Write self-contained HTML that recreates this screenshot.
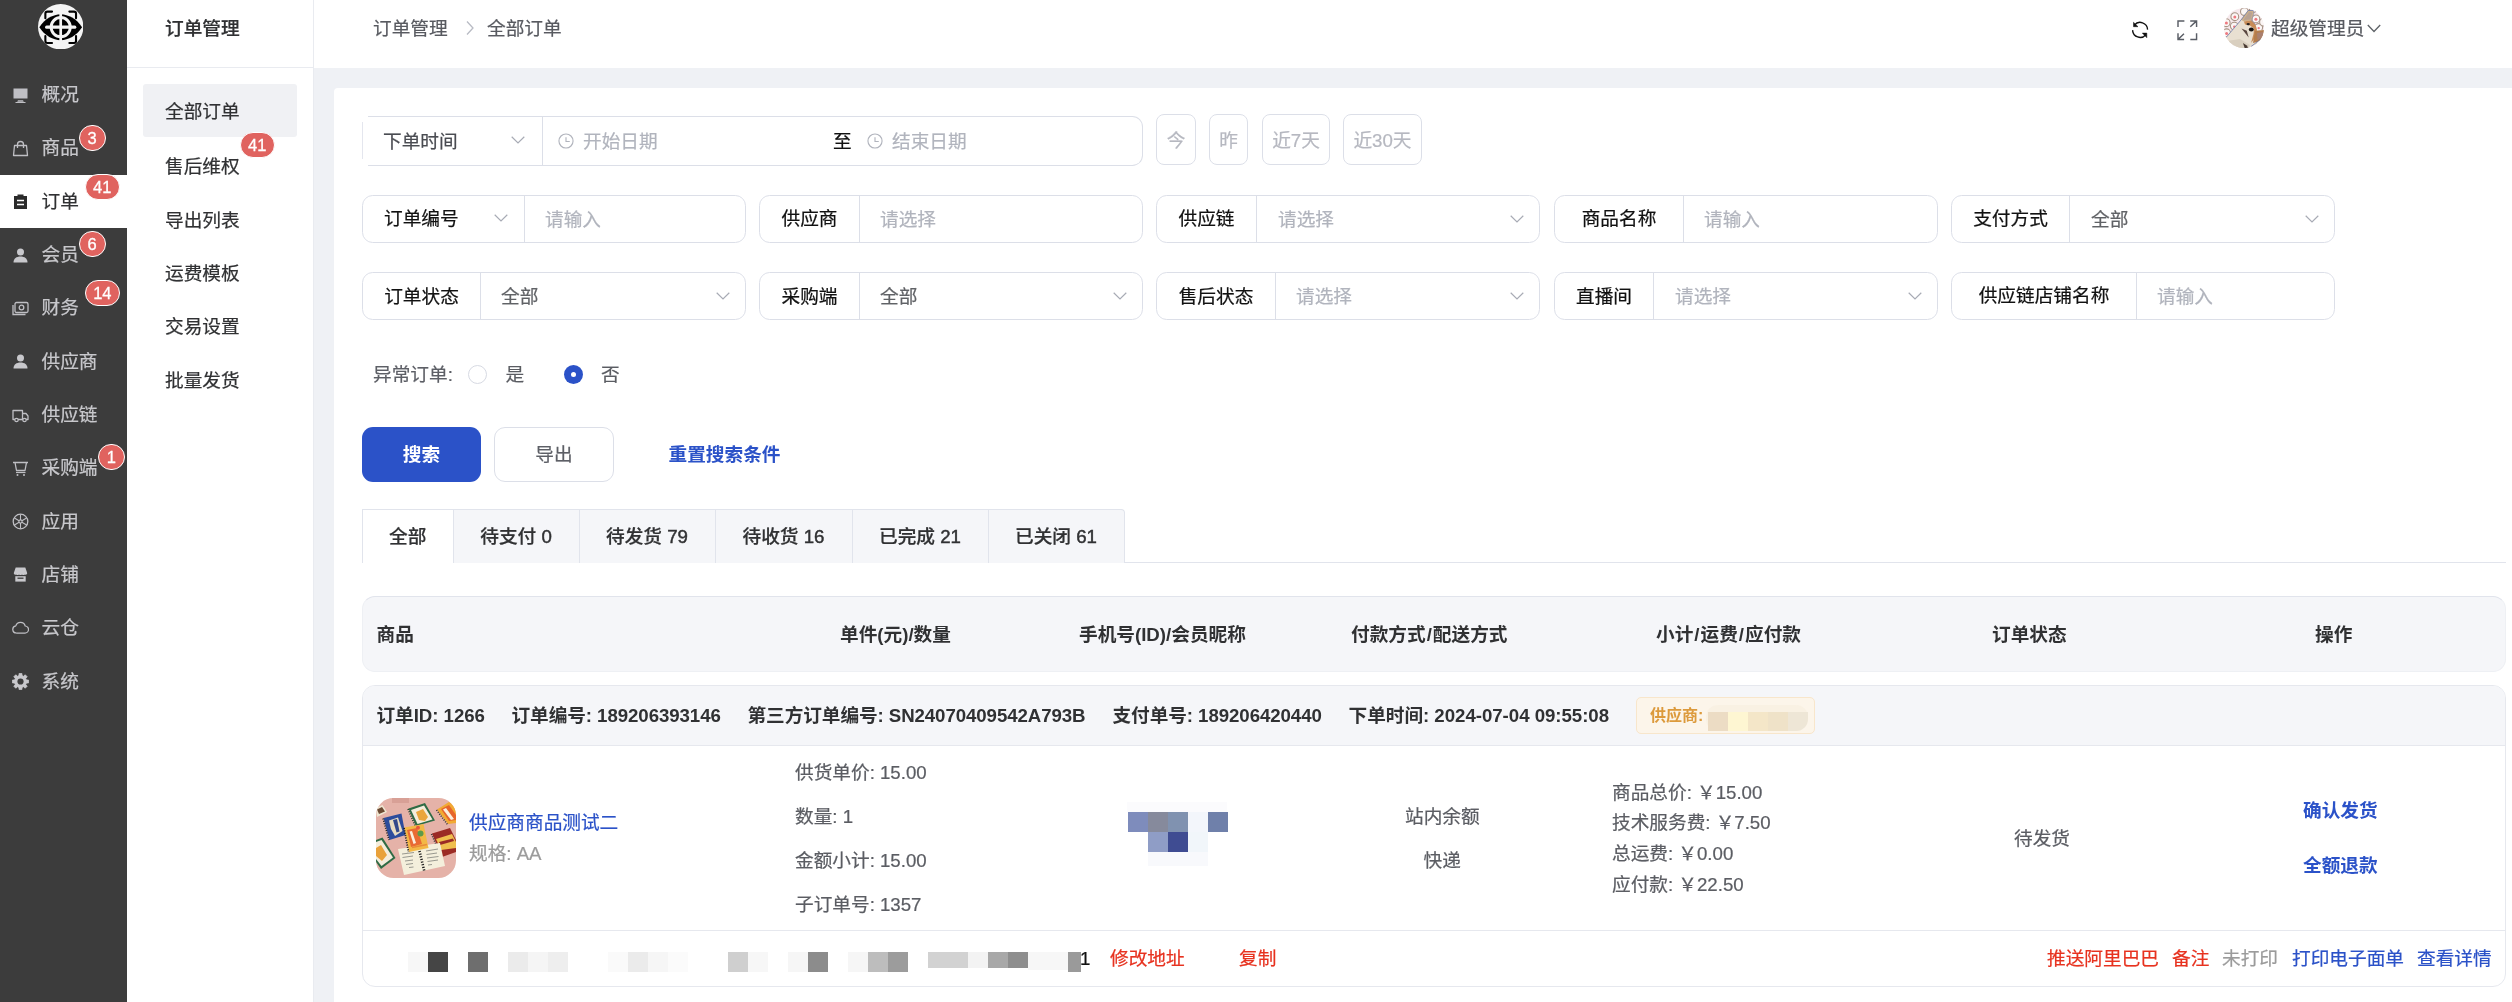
<!DOCTYPE html>
<html lang="zh-CN">
<head>
<meta charset="utf-8">
<title>订单管理 - 全部订单</title>
<style>
*{box-sizing:border-box;margin:0;padding:0}
html,body{width:2512px;height:1002px;overflow:hidden;background:#eff1f5}
#side,#sub,#top,#card,#content{will-change:transform}
body{font-family:"Liberation Sans","Noto Sans CJK SC",sans-serif;font-size:18.67px;color:#303133;position:relative;-webkit-font-smoothing:antialiased;-webkit-text-stroke-width:.22px}
.abs{position:absolute}
.t{position:absolute;white-space:nowrap;line-height:30px;height:30px}
.b{font-weight:700;-webkit-text-stroke-width:0}
.m{font-weight:500}
/* sidebar */
#side{position:absolute;left:0;top:0;width:127px;height:1002px;background:#3c3c3c}
#side .it{position:absolute;left:0;width:127px;height:53.33px;color:#c8c8cc}
#side .it.on{background:#fff;color:#303133}
#side .it span{position:absolute;left:41.5px;top:12.5px;line-height:28px;font-size:18.67px}
#side .it svg{position:absolute;left:12px;top:18.5px;width:17px;height:17px}
.bdg{position:absolute;box-sizing:content-box;height:24px;border-radius:14px;background:#e0635f;color:#fff;font-size:16.500px;line-height:25px;text-align:center;border:1.33px solid #fff;padding:0 7.8px;-webkit-text-stroke:.3px #fff}
/* sub sidebar */
#sub{position:absolute;left:127px;top:0;width:187px;height:1002px;background:#fff;border-right:1px solid #e9ebf0}
#sub .hd{position:absolute;left:0;top:0;width:186px;height:67.5px;border-bottom:1px solid #e9ebf0}
#sub .si{position:absolute;left:38px;line-height:30px;font-size:18.67px;color:#303133}
/* header */
#top{position:absolute;left:314px;top:0;width:2198px;height:67.5px;background:#fff}
/* card */
#card{position:absolute;left:334px;top:88px;width:2200px;height:940px;background:#fff;border-radius:4px}
.grp{position:absolute;height:48px;border:1px solid #dcdfe8;border-radius:10.67px;background:#fff}
.grp .lab{position:absolute;left:0;top:0;height:46px;line-height:47px;text-align:center;color:#111;border-right:1px solid #dcdfe8}
.grp .val{position:absolute;top:0;height:46px;line-height:47px;color:#606266}
.grp .ph{position:absolute;top:0;height:46px;line-height:47px;color:#b1b4bd}
.chev{position:absolute;width:14px;height:8px}
.qb{position:absolute;top:114px;height:51px;border:1px solid #dcdfe8;border-radius:8px;color:#b6b8c0;text-align:center;line-height:51px;background:#fff}
.tab{position:absolute;top:509px;height:54px;border-top:1px solid #e1e4ec;border-right:1px solid #e1e4ec;background:#f5f6f9;text-align:center;line-height:53px;font-weight:500;color:#303133}
.tab i{font-style:normal;-webkit-text-stroke:.45px #303133}
.sl{margin:0 1px}
.red{color:#e7321f}
.blue{color:#2b52c8}
.g6{color:#5b5d63}
</style>
</head>
<body>
<!-- ============ SIDEBAR ============ -->
<div id="side">
  <svg class="abs" style="left:37.800px;top:3.700px" width="45.400" height="45.400" viewBox="0 0 45.300 45.300">
    <circle cx="22.650" cy="22.650" r="22.650" fill="#f4f4f4"/>
    <path d="M1.300 23.100 C7 14.500 15 10.400 22.650 10.200 C30.300 10.400 38.300 14.500 44 23.100 C38.300 31.700 30.300 35.900 22.650 36.100 C15 35.900 7 31.700 1.300 23.100Z" fill="#000"/>
    <circle cx="22.650" cy="23.100" r="9.550" fill="none" stroke="#f4f4f4" stroke-width="2.900"/>
    <path d="M22.650 9.500 V37" stroke="#f4f4f4" stroke-width="2.700" fill="none"/>
    <path d="M8.600 23.100 H36.700" stroke="#f4f4f4" stroke-width="3.100" fill="none" stroke-linecap="round"/>
    <path d="M7.350 14.200 V9.600 Q7.350 7.600 9.350 7.600 H14 M31.300 7.600 H35.950 Q37.950 7.600 37.950 9.600 V14.200 M37.950 32 V36.900 Q37.950 38.900 35.950 38.900 H31.300 M14 38.900 H9.350 Q7.350 38.900 7.350 36.900 V32" stroke="#000" stroke-width="2.100" fill="none" stroke-linecap="round"/>
  </svg>
  <div class="it" style="top:68px"><svg viewBox="0 0 17 17"><path d="M1.500 1.500h14v10h-14z" fill="#bfbfc4"/><path d="M6 13.300h5l.8 1.500h-6.600z M3.500 15h10v1h-10z" fill="#bfbfc4"/></svg><span>概况</span></div>
  <div class="it" style="top:121.330px"><svg viewBox="0 0 17 17"><path d="M2.500 5.500h12l1 10h-14z" fill="none" stroke="#bfbfc4" stroke-width="1.300" stroke-linejoin="round"/><path d="M5.500 8V4.500a3 3 0 0 1 6 0V8" fill="none" stroke="#bfbfc4" stroke-width="1.300"/></svg><span>商品</span></div>
  <div class="it on" style="top:174.670px"><svg viewBox="0 0 17 17"><path d="M2 3h3.500V1.500h6V3H15v13H2z" fill="#2b2b2b"/><path d="M5 7.500h7M5 11.500h7" stroke="#fff" stroke-width="1.500"/></svg><span style="top:13.400px">订单</span></div>
  <div class="it" style="top:228px"><svg viewBox="0 0 17 17"><circle cx="8.500" cy="5" r="3.500" fill="#c8c8cc"/><path d="M1.500 15.500c0-4 3-6 7-6s7 2 7 6z" fill="#c8c8cc"/></svg><span>会员</span></div>
  <div class="it" style="top:281.330px"><svg viewBox="0 0 17 17"><rect x="3" y="2.500" width="13" height="10" rx="1.500" fill="none" stroke="#bfbfc4" stroke-width="1.300"/><circle cx="9.500" cy="7.500" r="2.300" fill="none" stroke="#bfbfc4" stroke-width="1.300"/><path d="M1 5v9.500h12.500" fill="none" stroke="#bfbfc4" stroke-width="1.300"/></svg><span>财务</span></div>
  <div class="it" style="top:334.670px"><svg viewBox="0 0 17 17"><circle cx="8.500" cy="5" r="3.500" fill="#c8c8cc"/><path d="M1.500 15.500c0-4 3-6 7-6s7 2 7 6z" fill="#c8c8cc"/></svg><span style="top:13.400px">供应商</span></div>
  <div class="it" style="top:388px"><svg viewBox="0 0 17 17"><path d="M1 3.500h9.500v9H1z M10.500 6.500h3.500l2 2.500v3.500h-5.500" fill="none" stroke="#bfbfc4" stroke-width="1.300" stroke-linejoin="round"/><circle cx="4.500" cy="13" r="1.700" fill="#3c3c3c" stroke="#bfbfc4" stroke-width="1.200"/><circle cx="12.500" cy="13" r="1.700" fill="#3c3c3c" stroke="#bfbfc4" stroke-width="1.200"/></svg><span>供应链</span></div>
  <div class="it" style="top:441.330px"><svg viewBox="0 0 17 17"><path d="M1 2.500h15M3 2.500l1.500 8h8.500l1.500-8" fill="none" stroke="#bfbfc4" stroke-width="1.300" stroke-linejoin="round"/><path d="M4 12.500h9.500" stroke="#bfbfc4" stroke-width="1.200"/><circle cx="5.500" cy="15" r="1" fill="#bfbfc4"/><circle cx="12" cy="15" r="1" fill="#bfbfc4"/></svg><span>采购端</span></div>
  <div class="it" style="top:494.670px"><svg viewBox="0 0 17 17"><circle cx="8.500" cy="8.500" r="7.300" fill="none" stroke="#bfbfc4" stroke-width="1.300"/><circle cx="8.500" cy="8.500" r="1.600" fill="none" stroke="#bfbfc4" stroke-width="1.100"/><path d="M8.500 1.500v5.400M8.500 10.100v5.400M2.400 5l4.700 2.700M9.900 9.300l4.700 2.700M2.400 12l4.700-2.700M9.900 7.700l4.700-2.700" stroke="#bfbfc4" stroke-width="1.100"/></svg><span style="top:13.400px">应用</span></div>
  <div class="it" style="top:548px"><svg viewBox="0 0 17 17"><path d="M3.700 .500h9.600l1.900 5.600c0 1.600-1.400 2.100-2.300 1.300-.9.900-2.100.9-2.900 0-.8.900-2.200.9-3 0-.8.900-2 .9-2.900 0-.9.800-2.300.3-2.300-1.300z" fill="#c8c8cc"/><path d="M3.300 9.200h10.400V14.600H3.300z" fill="#c8c8cc"/><path d="M5.500 11.200h6" stroke="#3c3c3c" stroke-width="1.300"/></svg><span>店铺</span></div>
  <div class="it" style="top:601.330px"><svg viewBox="0 0 17 17" style="left:11.800px;top:17px"><path d="M4.300 15a3.600 3.600 0 0 1-.5-7.150A4.900 4.900 0 0 1 13.200 8a3.500 3.500 0 0 1-.4 7z" fill="none" stroke="#bfbfc4" stroke-width="1.250" stroke-linejoin="round"/></svg><span>云仓</span></div>
  <div class="it" style="top:654.670px"><svg viewBox="0 0 17 17" style="left:11.800px;top:18.300px"><path d="M6.93 2.61L7.11 0.42L9.89 0.42L10.07 2.61L11.56 3.22L13.23 1.80L15.20 3.77L13.78 5.44L14.39 6.93L16.58 7.11L16.58 9.89L14.39 10.07L13.78 11.56L15.20 13.23L13.23 15.20L11.56 13.78L10.07 14.39L9.89 16.58L7.11 16.58L6.93 14.39L5.44 13.78L3.77 15.20L1.80 13.23L3.22 11.56L2.61 10.07L0.42 9.89L0.42 7.11L2.61 6.93L3.22 5.44L1.80 3.77L3.77 1.80L5.44 3.22Z" fill="#c8c8cc" stroke="#c8c8cc" stroke-width=".8" stroke-linejoin="round"/><circle cx="8.500" cy="8.500" r="3.100" fill="#3c3c3c"/></svg><span style="top:13.400px">系统</span></div>
  <div class="bdg" style="left:78.800px;top:124.800px">3</div>
  <div class="bdg" style="left:84.700px;top:174.400px;padding:0 7.400px">41</div>
  <div class="bdg" style="left:78.800px;top:230.800px">6</div>
  <div class="bdg" style="left:84.800px;top:279.800px;padding:0 7.400px">14</div>
  <div class="bdg" style="left:98px;top:443.800px">1</div>
</div>

<!-- ============ SUB SIDEBAR ============ -->
<div id="sub">
  <div class="hd"><div class="si m" style="top:14px">订单管理</div></div>
  <div class="abs" style="left:16px;top:84px;width:154px;height:53px;background:#f0f1f4;border-radius:3px"></div>
  <div class="si" style="top:97px">全部订单</div>
  <div class="si" style="top:152px">售后维权</div>
  <div class="si" style="top:206px">导出列表</div>
  <div class="si" style="top:259px">运费模板</div>
  <div class="si" style="top:312px">交易设置</div>
  <div class="si" style="top:366px">批量发货</div>
  <div class="bdg" style="left:112.700px;top:132px;padding:0 7.400px">41</div>
</div>

<!-- ============ TOP HEADER ============ -->
<div id="top">
  <div class="t" style="left:59px;top:14px;color:#585a60">订单管理</div>
  <svg class="abs" style="left:150.700px;top:20px" width="10" height="16" viewBox="0 0 10 16"><path d="M2 1.500l6 6.500-6 6.500" fill="none" stroke="#b8bbc4" stroke-width="1.300"/></svg>
  <div class="t" style="left:173px;top:14px;color:#585a60">全部订单</div>
  <!-- refresh -->
  <svg class="abs" style="left:1818px;top:21px" width="18" height="18" viewBox="0 0 18 18"><path d="M2.330 4.060A7.500 7.500 0 0 1 15.580 8.620M.590 9.140A7.500 7.500 0 0 0 13.830 13.700" fill="none" stroke="#111" stroke-width="1.350"/><path d="M1.500 1.300V5.700H6z M10.300 12.100H14.800V16.700z" fill="#111" stroke="#111" stroke-width=".5" stroke-linejoin="round"/></svg>
  <!-- fullscreen -->
  <svg class="abs" style="left:1863px;top:20px" width="21" height="21" viewBox="0 0 21 21"><path d="M1 7.100V.900H7.400M19.570 13.200V19.560H13.300M13.200 .900H19.570V6.900M19.570 .900L13.300 6.700M1 13.300V19.560H7.100M1 19.560L6.950 13.650" fill="none" stroke="#5a5e66" stroke-width="1.450"/></svg>
  <!-- avatar -->
  <svg class="abs" style="left:1910px;top:8.100px" width="40" height="40.200" viewBox="0 0 40 40">
    <defs><clipPath id="av"><circle cx="20" cy="20" r="20"/></clipPath></defs>
    <g clip-path="url(#av)">
      <rect width="40" height="40" fill="#f6e9ec"/>
      <g fill="#fbf6f5" stroke="#a89486" stroke-width="1.100">
        <circle cx="10.800" cy="8.600" r="3.900"/><circle cx="2.200" cy="14.600" r="3.900"/><circle cx="10.300" cy="18" r="3.900"/><circle cx="2.600" cy="24.700" r="3.900"/><circle cx="31.900" cy="10.800" r="3.900"/><circle cx="20.400" cy="3.400" r="3.900"/><circle cx="34.700" cy="19.400" r="3.900"/><circle cx="39.500" cy="14" r="3.900"/><circle cx="36" cy="36" r="3.900"/><circle cx="29" cy="1" r="3.500"/>
      </g>
      <g fill="#ee7a80"><circle cx="10.800" cy="9" r="1.500"/><circle cx="2.400" cy="15" r="1.500"/><circle cx="10.300" cy="18.600" r="1.300"/><circle cx="2.600" cy="25.300" r="1.500"/><circle cx="31.900" cy="11.200" r="1.500"/><circle cx="34.700" cy="20" r="1.200"/></g>
      <path d="M2 29.200L17 11.700L24.200 2.400L29.500 2.600L29.700 5.500L27.500 12.200L31.500 16.500L33 22L40 22V30L30 37.500L26 41H0V32z" fill="#e8dfd1"/>
      <path d="M17 11.700L24.200 2.400L29.500 2.600L29.700 5.500L27.500 12.200L19.900 13.400z" fill="#cdb08c"/>
      <path d="M19.500 11.800L25 4.200L28.300 4.500L26.300 11.300z" fill="#b8a294"/>
      <path d="M19.900 13.300L27.500 12.200L31.500 16.500L33 22L31 30L27 35L29.500 26L30 20.500L26 17.500L21 16.500z" fill="#c98d58"/>
      <path d="M31 22.800L40 22V30L33 34L29 35z" fill="#b47d4d"/>
      <path d="M33 25L39 24V29L33.500 32z" fill="#a98070"/>
      <path d="M3 33L16 31L26 37L24 41H2z" fill="#d9cfbf"/>
      <path d="M19 35L22.800 37.500L25 41H21z" fill="#4a3b34"/>
      <ellipse cx="24.200" cy="16" rx="1.700" ry="1.200" fill="#2a2320"/>
      <ellipse cx="27.300" cy="21.400" rx="2.500" ry="2.100" fill="#17120f"/>
      <path d="M17.500 20.400L22.800 22.600L24.700 29.500z" fill="#5a4740"/>
      <path d="M2 29.400L17 11.900L24.200 2.400H29.500" fill="none" stroke="#5b6ea6" stroke-width=".7"/>
      <path d="M29.500 2.600L29.700 5.500L27.500 12.200L31.500 16.500" fill="none" stroke="#6c7bb0" stroke-width=".5"/>
      <path d="M27 38.500L40 28.500" fill="none" stroke="#5b6ea6" stroke-width=".7"/>
    </g>
  </svg>
  <div class="t" style="left:1957px;top:14px;color:#585a60">超级管理员</div>
  <svg class="abs" style="left:2053px;top:24px" width="14" height="9" viewBox="0 0 14 9"><path d="M.8 1l6.200 6.500L13.200 1" fill="none" stroke="#5f6368" stroke-width="1.300"/></svg>
</div>

<!-- ============ CARD ============ -->
<div id="card"></div>
<div id="content" style="position:absolute;left:0;top:0;width:2512px;height:1002px">
<!-- row 1 : date -->
<div class="abs" style="left:368px;top:116px;width:775px;height:50px;border:1px solid #dcdfe8;border-left:0;border-radius:0 10.670px 10.670px 0;background:#fff"></div>
<div class="abs" style="left:362px;top:122px;width:1px;height:37px;background:#e4e6ee"></div>
<div class="abs" style="left:542px;top:116px;width:1px;height:50px;background:#dcdfe8"></div>
<div class="t" style="left:383px;top:127px;color:#4a4c52">下单时间</div>
<svg class="chev" style="left:511px;top:136px" viewBox="0 0 14 8"><path d="M.7.8l6.300 6.200L13.300.8" fill="none" stroke="#a8abb5" stroke-width="1.200"/></svg>
<svg class="abs" style="left:558px;top:133px" width="16" height="16" viewBox="0 0 17 17"><circle cx="8.500" cy="8.500" r="7.500" fill="none" stroke="#b1b4bd" stroke-width="1.200"/><path d="M8.500 4.500v4.500h4" fill="none" stroke="#b1b4bd" stroke-width="1.200"/></svg>
<div class="t" style="left:583px;top:127px;color:#b1b4bd">开始日期</div>
<div class="t" style="left:833px;top:127px;color:#111">至</div>
<svg class="abs" style="left:867px;top:133px" width="16" height="16" viewBox="0 0 17 17"><circle cx="8.500" cy="8.500" r="7.500" fill="none" stroke="#b1b4bd" stroke-width="1.200"/><path d="M8.500 4.500v4.500h4" fill="none" stroke="#b1b4bd" stroke-width="1.200"/></svg>
<div class="t" style="left:892px;top:127px;color:#b1b4bd">结束日期</div>
<div class="qb" style="left:1156px;width:40px">今</div>
<div class="qb" style="left:1209px;width:39px">昨</div>
<div class="qb" style="left:1262px;width:68px">近7天</div>
<div class="qb" style="left:1343px;width:79px">近30天</div>

<!-- row 2 -->
<div class="grp" style="left:362px;top:195px;width:384px"><div class="lab" style="width:162px;border-right:0"></div><div class="abs" style="left:161px;top:0;width:1px;height:47px;background:#dcdfe8"></div><div class="val" style="left:21px;color:#111;line-height:45px">订单编号</div><div class="ph" style="left:182px">请输入</div><svg class="chev" style="left:131px;top:18px" viewBox="0 0 14 8"><path d="M.7.8l6.300 6.200L13.300.8" fill="none" stroke="#a8abb5" stroke-width="1.200"/></svg></div>
<div class="grp" style="left:759px;top:195px;width:384px"><div class="lab" style="width:100px;line-height:45px">供应商</div><div class="ph" style="left:120px">请选择</div></div>
<div class="grp" style="left:1156px;top:195px;width:384px"><div class="lab" style="width:100px;line-height:45px">供应链</div><div class="ph" style="left:121px">请选择</div><svg class="chev" style="left:353px;top:19px" viewBox="0 0 14 8"><path d="M.7.8l6.300 6.200L13.300.8" fill="none" stroke="#a8abb5" stroke-width="1.200"/></svg></div>
<div class="grp" style="left:1554px;top:195px;width:384px"><div class="lab" style="width:129px;line-height:45px">商品名称</div><div class="ph" style="left:149px">请输入</div></div>
<div class="grp" style="left:1951px;top:195px;width:384px"><div class="lab" style="width:118px;line-height:45px">支付方式</div><div class="val" style="left:139px">全部</div><svg class="chev" style="left:353px;top:19px" viewBox="0 0 14 8"><path d="M.7.8l6.300 6.200L13.300.8" fill="none" stroke="#a8abb5" stroke-width="1.200"/></svg></div>

<!-- row 3 -->
<div class="grp" style="left:362px;top:272px;width:384px"><div class="lab" style="width:118px">订单状态</div><div class="val" style="left:138px">全部</div><svg class="chev" style="left:353px;top:19px" viewBox="0 0 14 8"><path d="M.7.8l6.300 6.200L13.300.8" fill="none" stroke="#a8abb5" stroke-width="1.200"/></svg></div>
<div class="grp" style="left:759px;top:272px;width:384px"><div class="lab" style="width:100px">采购端</div><div class="val" style="left:120px">全部</div><svg class="chev" style="left:353px;top:19px" viewBox="0 0 14 8"><path d="M.7.8l6.300 6.200L13.300.8" fill="none" stroke="#a8abb5" stroke-width="1.200"/></svg></div>
<div class="grp" style="left:1156px;top:272px;width:384px"><div class="lab" style="width:119px">售后状态</div><div class="ph" style="left:139px">请选择</div><svg class="chev" style="left:353px;top:19px" viewBox="0 0 14 8"><path d="M.7.8l6.300 6.200L13.300.8" fill="none" stroke="#a8abb5" stroke-width="1.200"/></svg></div>
<div class="grp" style="left:1554px;top:272px;width:384px"><div class="lab" style="width:99px">直播间</div><div class="ph" style="left:120px">请选择</div><svg class="chev" style="left:353px;top:19px" viewBox="0 0 14 8"><path d="M.7.8l6.300 6.200L13.300.8" fill="none" stroke="#a8abb5" stroke-width="1.200"/></svg></div>
<div class="grp" style="left:1951px;top:272px;width:384px"><div class="lab" style="width:185px;line-height:45px">供应链店铺名称</div><div class="ph" style="left:205px">请输入</div></div>

<!-- radio row -->
<div class="t" style="left:373px;top:360px;color:#5d5f66">异常订单:</div>
<div class="abs" style="left:468px;top:365px;width:19px;height:19px;border-radius:50%;border:1px solid #d6d9e2;background:#fff"></div>
<div class="t" style="left:505.500px;top:360px;color:#5a5c62">是</div>
<div class="abs" style="left:563.500px;top:365px;width:19px;height:19px;border-radius:50%;background:#2b52c8"></div>
<div class="abs" style="left:570.500px;top:372px;width:5px;height:5px;border-radius:50%;background:#fff"></div>
<div class="t" style="left:601px;top:360px;color:#5a5c62">否</div>

<!-- buttons -->
<div class="abs b" style="left:362px;top:427px;width:119px;height:55px;border-radius:11px;background:#2b52c8;color:#fff;text-align:center;line-height:56px">搜索</div>
<div class="abs" style="left:494px;top:427px;width:120px;height:55px;border-radius:11px;background:#fff;border:1px solid #dcdfe8;color:#5d5f66;text-align:center;line-height:54px">导出</div>
<div class="t b blue" style="left:668.500px;top:440px">重置搜索条件</div>

<!-- tabs -->
<div class="abs" style="left:362px;top:562px;width:2144px;height:1px;background:#e1e4ec"></div>
<div class="tab" style="left:362px;width:91.500px;background:#fff;border-left:1px solid #e1e4ec;height:54px">全部</div>
<div class="tab" style="left:453.500px;width:126px">待支付 <i>0</i></div>
<div class="tab" style="left:579.500px;width:136px">待发货 <i>79</i></div>
<div class="tab" style="left:715.500px;width:137px">待收货 <i>16</i></div>
<div class="tab" style="left:852.500px;width:136px">已完成 <i>21</i></div>
<div class="tab" style="left:988.500px;width:136px;border-top-right-radius:4px">已关闭 <i>61</i></div>
<!-- table header -->
<div class="abs" style="left:362px;top:596px;width:2144px;height:76px;background:#f5f6f9;border-radius:13px;border:1px solid #eef0f4;border-top:1px solid #e1e4ec"></div>
<div class="t b" style="left:376.500px;top:620px">商品</div>
<div class="t b" style="left:840px;top:620px">单件(元)/数量</div>
<div class="t b" style="left:1079px;top:620px">手机号(ID)/会员昵称</div>
<div class="t b" style="left:1351px;top:620px">付款方式<span class="sl">/</span>配送方式</div>
<div class="t b" style="left:1656px;top:620px">小计<span class="sl">/</span>运费<span class="sl">/</span>应付款</div>
<div class="t b" style="left:1992px;top:620px">订单状态</div>
<div class="t b" style="left:2315px;top:620px">操作</div>

<!-- order box -->
<div class="abs" style="left:362px;top:685px;width:2144px;height:302px;border:1px solid #e6e8ee;border-radius:13px;background:#fff;overflow:hidden">
  <div class="abs" style="left:0;top:0;width:2144px;height:60px;background:#f5f6f9;border-bottom:1px solid #e6e8ee"></div>
  <div class="abs" style="left:0;top:244px;width:2144px;height:1px;background:#e6e8ee"></div>
</div>
<div class="t b" style="left:376.500px;top:701px;letter-spacing:-.05px">订单ID: 1266</div>
<div class="t b" style="left:511.500px;top:701px;letter-spacing:-.07px">订单编号: 189206393146</div>
<div class="t b" style="left:747.500px;top:701px;letter-spacing:-.08px">第三方订单编号: SN24070409542A793B</div>
<div class="t b" style="left:1112.500px;top:701px;letter-spacing:-.07px">支付单号: 189206420440</div>
<div class="t b" style="left:1348.500px;top:701px;letter-spacing:-.03px">下单时间: 2024-07-04 09:55:08</div>
<div class="abs" style="left:1636px;top:697px;width:179px;height:37px;background:#fcf5ea;border:1px solid #f8e6cb;border-radius:5px"></div>
<div class="t b" style="left:1650px;top:701px;font-size:16px;color:#dc9a3c">供应商:</div>
<svg class="abs" style="left:1706px;top:703px" width="104" height="30" viewBox="0 0 104 30"><rect x="0" y="2" width="102" height="26" rx="12" fill="#f8efe0" opacity=".7"/><rect x="2" y="9" width="20" height="19" fill="#ecdcc4"/><rect x="22" y="9" width="20" height="19" fill="#fef6d2"/><rect x="42" y="9" width="20" height="19" fill="#f4e6c8"/><rect x="62" y="9" width="20" height="19" fill="#efe2c8"/><path d="M82 9h20v7a12 12 0 0 1-12 12h-8z" fill="#eee6d6"/></svg>

<!-- product -->
<svg class="abs" style="left:376px;top:798px" width="80" height="80" viewBox="0 0 80 80">
  <defs><clipPath id="pi"><rect width="80" height="80" rx="17.500"/></clipPath></defs>
  <g clip-path="url(#pi)">
    <rect width="80" height="80" fill="#e5b2a8"/>
    <rect x="16" y="-1" width="17" height="6" fill="#d8a096"/>
    <path d="M0 10L6.500 7L11 14L1 19z" fill="#efe6d2"/><path d="M1 11.500L6 9L9 13.500L3 16z" fill="#6b4a33"/>
    <!-- blue -->
    <path d="M7.500 20L25.500 15.500L29.500 37L13.500 42z" fill="#2d4c9c"/>
    <path d="M13 22.500L22 19.500L26.500 33L19 38L15 31z" fill="#e9dcc2"/>
    <path d="M17 22L21 21L23.500 33.500L20.500 34.500z" fill="#33498a"/>
    <path d="M7 20.500L13 42" stroke="#2a2a2a" stroke-width="1.600" stroke-dasharray="1.100 1.300" fill="none"/>
    <!-- green/white top -->
    <path d="M32.500 10.500L49 5L59 22.500L40 28z" fill="#2f6b45"/>
    <path d="M35 12L48 7.500L56.500 21.500L41.500 26z" fill="#f4ecdc"/>
    <path d="M40 14L47 11L52 19L49 23L43 22z" fill="#eaa53c"/>
    <path d="M32 11L39.500 28.500" stroke="#23402c" stroke-width="1.600" stroke-dasharray="1.100 1.300" fill="none"/>
    <!-- orange top right -->
    <path d="M61 11.500L73 4L80 8V25L72 26z" fill="#f1aa33"/>
    <path d="M65 11L73 7L80 17V22L73 23z" fill="#e7652b"/>
    <path d="M67 11.500L70 10L78 21L75 22z" fill="#fbeedd"/>
    <path d="M60.500 12L71.500 26.500" stroke="#3a3a3a" stroke-width="1.600" stroke-dasharray="1.100 1.300" fill="none"/>
    <!-- dark red -->
    <path d="M56 35.500L74 30L80 42V54L66 59z" fill="#9b2b25"/>
    <path d="M60 41L76 36L80 44V50L65 52z" fill="#f0bf4f"/>
    <path d="M63 44L77 40.500L78 43L64 47z" fill="#9b2b25"/>
    <path d="M55.500 36L65.500 59.500" stroke="#3a3a3a" stroke-width="1.600" stroke-dasharray="1.100 1.300" fill="none"/>
    <!-- green/white left bottom -->
    <path d="M0 42L6.500 39.500L19.500 60L5 71L0 64z" fill="#2f6b45"/>
    <path d="M0 44L5.500 42L17 59.500L5.500 68L0 61z" fill="#f4ecdc"/>
    <path d="M0 50L5 47L11 57L6 63L0 58z" fill="#e9a13a"/>
    <!-- open notebook -->
    <path d="M22 51L64 45L69 68L28 77z" fill="#f4efdc"/>
    <path d="M26 56L38 54.500M26.500 59.500L37 58M29 63L37 62M30 66.500L37 65.500M33 69.500L37.500 69M50 53L62 51M50.500 56.500L61 55M51 60L62.500 58.500M51.500 63.500L62 62M52 67L56 66.500" stroke="#8d8d86" stroke-width=".9" fill="none"/>
    <path d="M43.500 53L48.500 74" stroke="#222" stroke-width="2.600" stroke-dasharray="1.200 1.500" fill="none"/>
    <!-- yellow centre -->
    <path d="M28.500 29.500L47.500 26L52.500 50L33 54z" fill="#f3b845"/>
    <path d="M31 32L41 30L46 46L35 49z" fill="#e96a33"/>
    <path d="M33.500 33.500L36 33L40 45L37.500 46z" fill="#fbeedd"/>
    <circle cx="44.500" cy="35.500" r="3" fill="#5d9a4b"/><circle cx="42" cy="29.800" r="2" fill="#e9573a"/>
    <path d="M36 49.500L51 46.500" stroke="#e98a3a" stroke-width="1.400" fill="none"/>
    <path d="M28 30L32.500 54" stroke="#222" stroke-width="1.800" stroke-dasharray="1.100 1.300" fill="none"/>
  </g>
</svg>
<div class="t blue" style="left:469px;top:808px">供应商商品测试二</div>
<div class="t" style="left:469px;top:839px;color:#9b9b9b">规格: AA</div>

<div class="t g6" style="left:795px;top:758px">供货单价: 15.00</div>
<div class="t g6" style="left:795px;top:802px">数量: 1</div>
<div class="t g6" style="left:795px;top:846px">金额小计: 15.00</div>
<div class="t g6" style="left:795px;top:890px">子订单号: 1357</div>

<!-- phone blur -->
<svg class="abs" style="left:1127px;top:802px" width="102" height="66" viewBox="0 0 102 66"><rect x="0" y="0" width="100" height="10" fill="#fbfbfd"/><rect x="1" y="10" width="20" height="20" fill="#7e8cbc"/><rect x="21" y="10" width="20" height="20" fill="#868a9c"/><rect x="41" y="10" width="20" height="20" fill="#8092b0"/><rect x="61" y="10" width="20" height="20" fill="#f3f6fb"/><rect x="81" y="10" width="20" height="20" fill="#6f80aa"/><rect x="21" y="30" width="20" height="20" fill="#8f9dc6"/><rect x="41" y="30" width="20" height="20" fill="#3f4c92"/><rect x="61" y="30" width="20" height="20" fill="#f1f6fa"/><rect x="21" y="50" width="60" height="14" fill="#f8f9fc"/></svg>

<div class="t g6" style="left:1405px;top:802px">站内余额</div>
<div class="t g6" style="left:1423.500px;top:846px">快递</div>

<div class="t g6" style="left:1612px;top:778px">商品总价: ￥15.00</div>
<div class="t g6" style="left:1612px;top:808px">技术服务费: ￥7.50</div>
<div class="t g6" style="left:1612px;top:839px">总运费: ￥0.00</div>
<div class="t g6" style="left:1612px;top:870px">应付款: ￥22.50</div>

<div class="t g6" style="left:2014px;top:824px">待发货</div>
<div class="t b blue" style="left:2303px;top:796px">确认发货</div>
<div class="t b blue" style="left:2303px;top:851px">全额退款</div>

<!-- footer row -->
<svg class="abs" style="left:408px;top:950px" width="676" height="24" viewBox="0 0 676 24"><rect x="0" y="2" width="20" height="20" fill="#f7f7f7"/><rect x="20" y="2" width="20" height="20" fill="#454545"/><rect x="60" y="2" width="20" height="20" fill="#6e6e6e"/><rect x="100" y="2" width="20" height="20" fill="#ebebeb"/><rect x="120" y="2" width="20" height="20" fill="#f5f5f5"/><rect x="140" y="2" width="20" height="20" fill="#eeeeee"/><rect x="200" y="2" width="20" height="20" fill="#fafafa"/><rect x="220" y="2" width="20" height="20" fill="#ebebeb"/><rect x="240" y="2" width="20" height="20" fill="#f6f6f6"/><rect x="260" y="2" width="20" height="20" fill="#fbfbfb"/><rect x="320" y="2" width="20" height="20" fill="#cfcfcf"/><rect x="340" y="2" width="20" height="20" fill="#f7f7f7"/><rect x="380" y="2" width="20" height="20" fill="#f6f6f6"/><rect x="400" y="2" width="20" height="20" fill="#8c8c8c"/><rect x="440" y="2" width="20" height="20" fill="#f6f6f6"/><rect x="460" y="2" width="20" height="20" fill="#bdbdbd"/><rect x="480" y="2" width="20" height="20" fill="#9c9c9c"/><rect x="520" y="2" width="40" height="16" fill="#d2d2d2"/><rect x="560" y="2" width="20" height="16" fill="#f3f3f3"/><rect x="580" y="2" width="20" height="16" fill="#a8a8a8"/><rect x="600" y="2" width="20" height="16" fill="#8e8e8e"/><rect x="620" y="2" width="40" height="18" fill="#f7f7f7"/><rect x="660" y="2" width="13" height="20" fill="#9a9a9a"/></svg>
<div class="t" style="left:1080px;top:944px;color:#111">1</div>
<div class="t red" style="left:1110px;top:944px">修改地址</div>
<div class="t red" style="left:1239px;top:944px">复制</div>
<div class="t red" style="left:2047px;top:944px">推送阿里巴巴</div>
<div class="t red" style="left:2172px;top:944px">备注</div>
<div class="t" style="left:2222px;top:944px;color:#9b9b9b">未打印</div>
<div class="t blue" style="left:2292px;top:944px">打印电子面单</div>
<div class="t blue" style="left:2417px;top:944px">查看详情</div>
</div>
</body>
</html>
